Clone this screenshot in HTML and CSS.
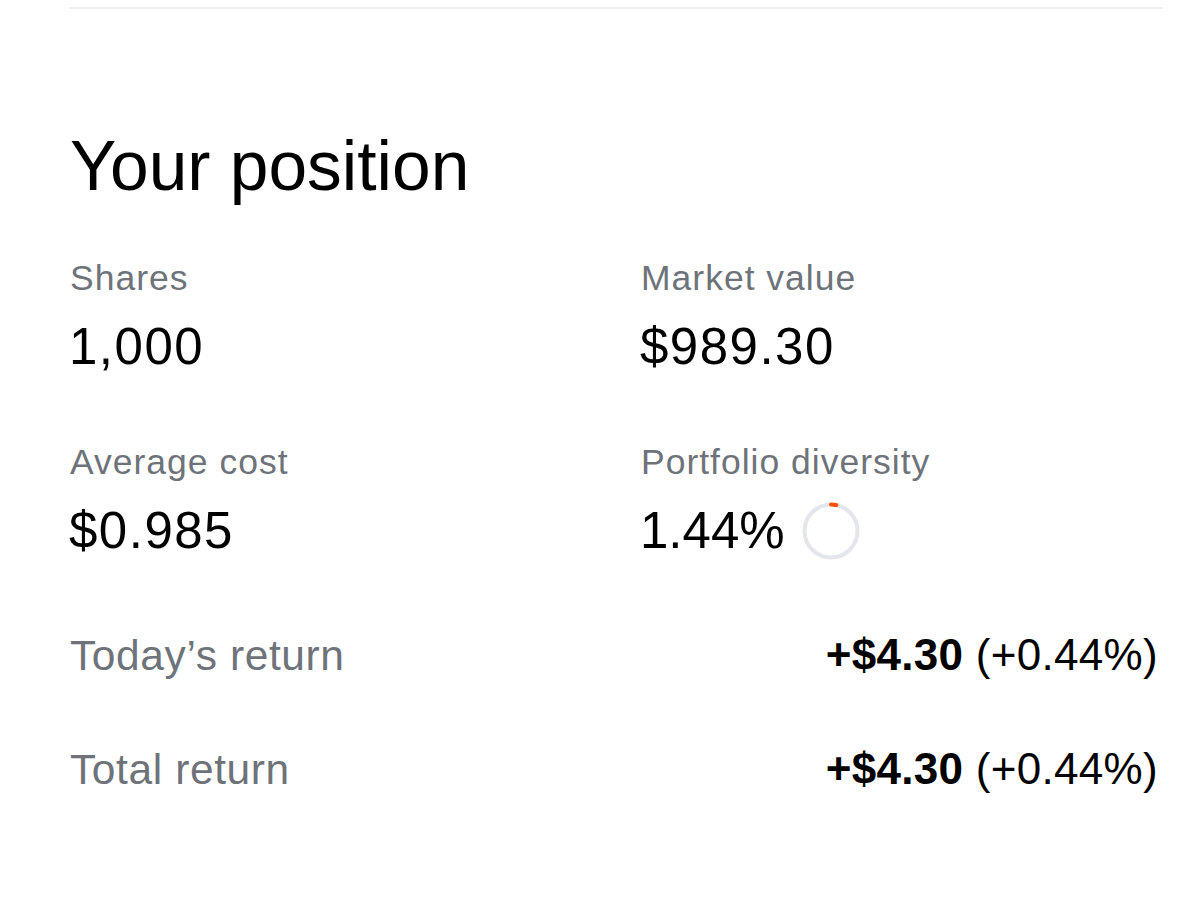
FILE: index.html
```html
<!DOCTYPE html>
<html lang="en">
<head>
<meta charset="utf-8">
<title>Your position</title>
<link rel="stylesheet" href="styles.css">
</head>
<body>
<main class="page">
  <div class="divider"></div>
  <section class="position">
    <h2 class="title">Your position</h2>
    <div class="stats">
      <div class="stat">
        <div class="label">Shares</div>
        <div class="value">1,000</div>
      </div>
      <div class="stat">
        <div class="label">Market value</div>
        <div class="value">$989.30</div>
      </div>
      <div class="stat">
        <div class="label">Average cost</div>
        <div class="value">$0.985</div>
      </div>
      <div class="stat">
        <div class="label">Portfolio diversity</div>
        <div class="value value-ring">1.44%
          <svg class="ring" width="58" height="58" viewBox="0 0 58 58" aria-hidden="true">
            <circle cx="29" cy="29" r="26.5" fill="none" stroke="#e3e6ea" stroke-width="4"/>
            <circle cx="29" cy="29" r="26.5" fill="none" stroke="#ff5000" stroke-width="4" stroke-linecap="round" stroke-dasharray="5.5 200" transform="rotate(-90 29 29)"/>
          </svg>
        </div>
      </div>
    </div>
    <div class="returns">
      <div class="return-row">
        <span class="return-label">Today’s return</span>
        <span class="return-value"><b>+$4.30</b> (+0.44%)</span>
      </div>
      <div class="return-row">
        <span class="return-label">Total return</span>
        <span class="return-value"><b>+$4.30</b> (+0.44%)</span>
      </div>
    </div>
  </section>
</main>
</body>
</html>
```
FILE: styles.css
```css
html, body {
  margin: 0;
  padding: 0;
  background: #ffffff;
}
body {
  font-family: "Liberation Sans", Arial, Helvetica, sans-serif;
  color: #000000;
}
.page {
  padding: 0 37px 0 69px;
}
.divider {
  height: 2px;
  margin-top: 7px;
  background: #eeeff0;
}
.position {
  padding-top: 117px;
}
.title {
  margin: 0;
  padding-left: 1px;
  font-size: 69.5px;
  font-weight: 400;
  line-height: 80px;
}
.stats {
  display: grid;
  grid-template-columns: 571px 1fr;
  row-gap: 67px;
  margin-top: 52px;
}
.label {
  padding-left: 1px;
  font-size: 35.5px;
  line-height: 40px;
  letter-spacing: 1px;
  color: #6e737a;
}
.value {
  margin-top: 21px;
  font-size: 51px;
  line-height: 56px;
  letter-spacing: 1.5px;
}
.value-ring {
  display: flex;
  align-items: flex-start;
  gap: 17px;
  letter-spacing: 0;
}
.ring {
  display: block;
  margin-top: -1px;
}
.returns {
  margin-top: 71px;
  padding-right: 5px;
  display: flex;
  flex-direction: column;
  gap: 65px;
}
.return-row {
  display: flex;
  justify-content: space-between;
  align-items: baseline;
  line-height: 48px;
}
.return-label {
  padding-left: 1px;
  font-size: 42.5px;
  letter-spacing: 0.6px;
  color: #6e737a;
}
.return-value {
  font-size: 44px;
  letter-spacing: 0.3px;
}
.return-value b {
  font-weight: 700;
}
```
